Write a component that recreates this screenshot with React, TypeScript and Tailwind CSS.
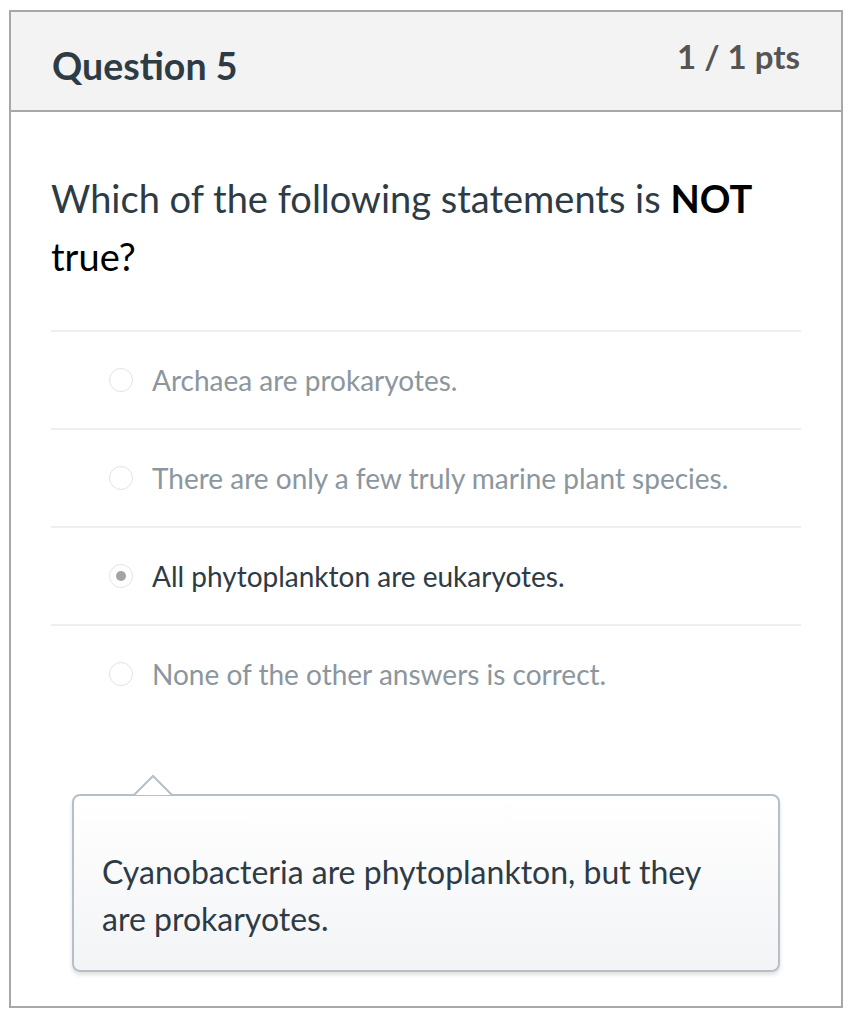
import React from "react";

const answers = [
  { text: "Archaea are prokaryotes.", selected: false },
  { text: "There are only a few truly marine plant species.", selected: false },
  { text: "All phytoplankton are eukaryotes.", selected: true },
  { text: "None of the other answers is correct.", selected: false },
];

const App = () => {
  return (
    <div className="min-h-[1026px] bg-white pl-[9px] pt-[10px] font-['Lato','Noto_Sans',sans-serif]">
      <div className="w-[834px] h-[998px] border-2 border-[#a8a8a8] bg-white">
        <div className="h-[100px] bg-[#f3f3f3] border-b-2 border-[#a8a8a8] flex items-start justify-between pl-[41px] pr-[41px]">
          <h2 className="mt-[31px] text-[37.5px] font-bold text-[#2d3b45] leading-[46px]">
            Question 5
          </h2>
          <div className="mt-[23px] text-[33px] font-bold text-[#555555] leading-[42px]">
            1 / 1 pts
          </div>
        </div>

        <div className="px-[40px]">
          <p className="mt-[57px] text-[38px] leading-[58px] text-[#2d3b45]">
            Which of the following statements is{" "}
            <strong className="font-bold text-black">NOT</strong>
            <br />
            <span className="text-black">true?</span>
          </p>

          <div className="mt-[45px]">
            {answers.map((answer, index) => (
              <div
                key={index}
                className="h-[98px] border-t-2 border-[#eeeeee] flex items-center pl-[58px]"
              >
                <div className="w-[24px] h-[24px] rounded-full border border-[#e3e3e3] bg-white flex items-center justify-center">
                  {answer.selected && (
                    <div className="w-[10px] h-[10px] rounded-full bg-[#a3a3a3]"></div>
                  )}
                </div>
                <span
                  className={
                    answer.selected
                      ? "ml-[19px] text-[28px] text-[#2d3b45]"
                      : "ml-[19px] text-[28px] text-[#8b969e]"
                  }
                >
                  {answer.text}
                </span>
              </div>
            ))}
          </div>

          <div className="relative mt-[72px] mx-[21px]">
            <svg
              className="absolute left-[62px] top-[-20px]"
              width="40"
              height="22"
              viewBox="0 0 40 22"
            >
              <path d="M0 21 L19 2 L38 21" fill="#ffffff" stroke="#b4bfc8" strokeWidth="2" />
            </svg>
            <div className="h-[178px] rounded-[8px] border-2 border-[#b4bfc8] bg-gradient-to-b from-white to-[#f3f4f6] shadow-[0_3px_4px_rgba(0,0,0,0.12)] px-[28px] pt-[52px]">
              <p className="text-[32px] leading-[47px] text-[#2d3b45]">
                Cyanobacteria are phytoplankton, but they
                <br />
                are prokaryotes.
              </p>
            </div>
          </div>
        </div>
      </div>
    </div>
  );
};

export default App;
